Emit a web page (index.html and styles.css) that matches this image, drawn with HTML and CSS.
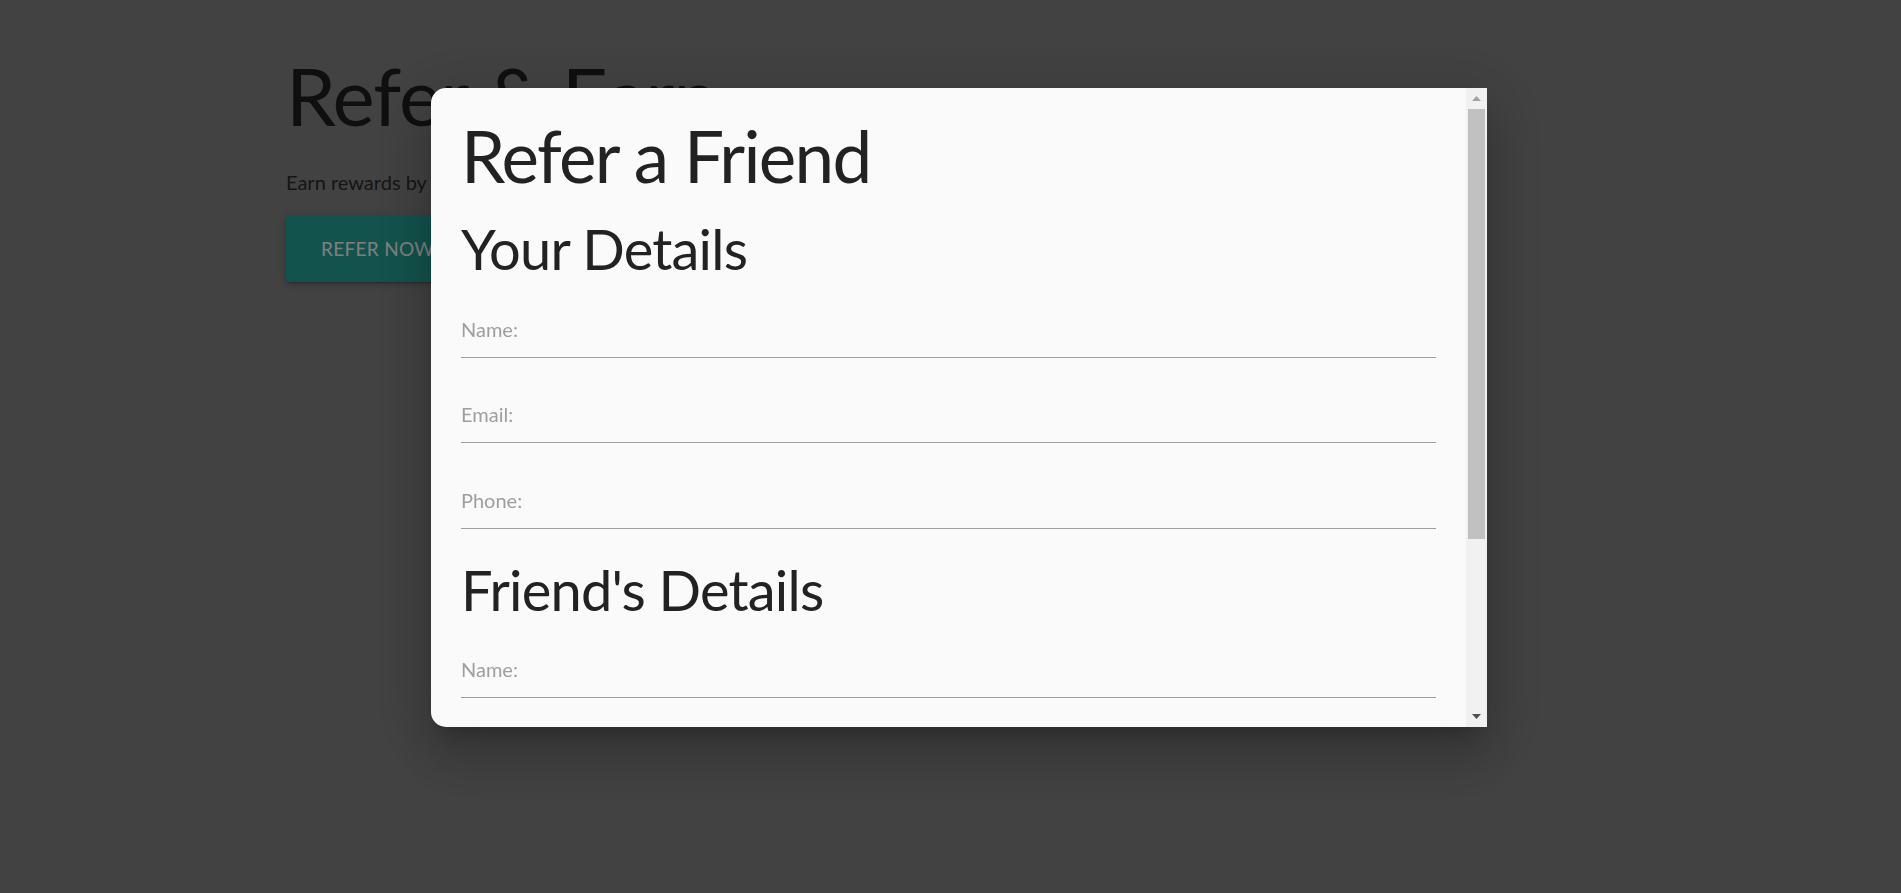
FILE: index.html
```html
<!DOCTYPE html>
<html lang="en">
<head>
<meta charset="utf-8">
<title>Refer &amp; Earn</title>
<link rel="stylesheet" href="styles.css">
</head>
<body>
<main class="page">
  <h1 class="page-title">Refer &amp; Earn</h1>
  <p class="page-text">Earn rewards by referring your friends to our service.</p>
  <button class="btn-large" type="button">Refer Now</button>
</main>
<div class="overlay"></div>
<div class="modal">
  <div class="modal-content">
    <h2 class="modal-title">Refer a Friend</h2>
    <h3 class="section-title">Your Details</h3>
    <div class="field"><span class="field-label">Name:</span></div>
    <div class="field"><span class="field-label">Email:</span></div>
    <div class="field"><span class="field-label">Phone:</span></div>
    <h3 class="section-title section-title--spaced">Friend's Details</h3>
    <div class="field"><span class="field-label">Name:</span></div>
    <div class="field"><span class="field-label">Email:</span></div>
    <div class="field"><span class="field-label">Phone:</span></div>
    <button class="btn-submit" type="button">Submit</button>
  </div>
  <div class="scrollbar">
    <div class="sb-btn">
      <svg width="9" height="5" viewBox="0 0 9 5"><path d="M4.5 0L9 5H0z" fill="#a3a3a3"/></svg>
    </div>
    <div class="sb-track"><div class="sb-thumb"></div></div>
    <div class="sb-btn">
      <svg width="9" height="5" viewBox="0 0 9 5"><path d="M0 0H9L4.5 5z" fill="#505050"/></svg>
    </div>
  </div>
</div>
</body>
</html>
```
FILE: styles.css
```css
html, body {
  margin: 0;
  padding: 0;
}

body {
  background: #848484;
  font-family: Lato, "Open Sans", sans-serif;
  color: #222;
  height: 893px;
  overflow: hidden;
}

.page {
  margin-left: 286px;
  padding-top: 51px;
}

.page-title {
  margin: 0;
  font-size: 80px;
  line-height: 88px;
  font-weight: 400;
  letter-spacing: -1px;
  color: #1e1e1e;
}

.page-text {
  margin: 28px 0 0;
  font-size: 20px;
  line-height: 30px;
  color: #2a2a2a;
}

.btn-large {
  margin-top: 18px;
  height: 67px;
  padding: 0 35px;
  border: none;
  border-radius: 3px;
  background: #26a69a;
  color: #fff;
  font-family: inherit;
  font-size: 19px;
  text-transform: uppercase;
  letter-spacing: 0.3px;
  box-shadow: 0 3px 4px 0 rgba(0,0,0,0.14), 0 1px 9px 0 rgba(0,0,0,0.12), 0 3px 1px -2px rgba(0,0,0,0.2);
}

.overlay {
  position: fixed;
  inset: 0;
  background: rgba(0, 0, 0, 0.5);
}

.modal {
  position: fixed;
  top: 88px;
  left: 431px;
  width: 1056px;
  height: 639px;
  display: flex;
  background: #fafafa;
  border-radius: 15px 0 0 15px;
  overflow: hidden;
  box-shadow: 0 30px 48px 4px rgba(0,0,0,0.14), 0 11px 58px 10px rgba(0,0,0,0.12), 0 14px 19px -9px rgba(0,0,0,0.2);
}

.modal-content {
  flex: 1;
  min-width: 0;
  padding: 29px 30px 0;
  overflow: hidden;
}

.modal-title {
  margin: 0;
  font-size: 71px;
  line-height: 78px;
  font-weight: 400;
  letter-spacing: -1.7px;
  color: #222;
}

.section-title {
  margin: 23px 0 0;
  font-size: 56px;
  line-height: 62px;
  font-weight: 400;
  letter-spacing: -0.8px;
  color: #222;
}

.section-title--spaced {
  margin-top: 30px;
}

.field {
  margin-top: 41.5px;
  padding-bottom: 13px;
  border-bottom: 1px solid #9e9e9e;
}

.section-title + .field {
  margin-top: 33.5px;
}

.field-label {
  display: block;
  font-size: 20px;
  line-height: 30px;
  color: #9e9e9e;
}

.btn-submit {
  margin-top: 30px;
  height: 45px;
  padding: 0 35px;
  border: none;
  border-radius: 3px;
  background: #26a69a;
  color: #fff;
  font-family: inherit;
  font-size: 18px;
  text-transform: uppercase;
}

.scrollbar {
  width: 21px;
  flex: none;
  display: flex;
  flex-direction: column;
  background: #f1f1f1;
}

.sb-btn {
  height: 21px;
  flex: none;
  display: flex;
  align-items: center;
  justify-content: center;
}

.sb-btn svg {
  display: block;
}

.sb-track {
  flex: 1;
  padding: 0 2px;
}

.sb-thumb {
  height: 430px;
  background: #c1c1c1;
}
```
